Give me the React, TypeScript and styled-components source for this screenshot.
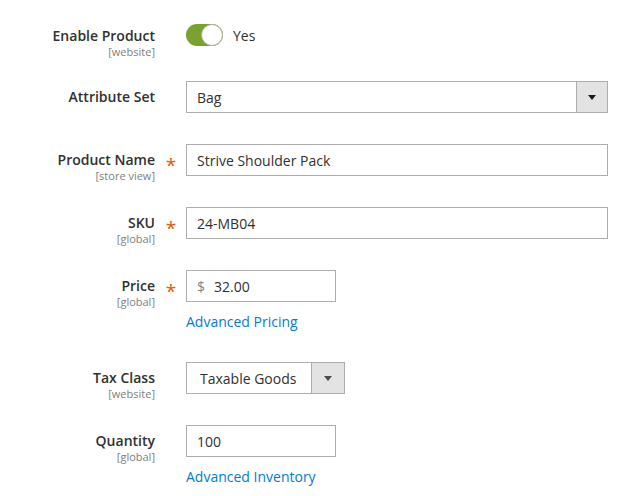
import React from "react";
import styled, { createGlobalStyle } from "styled-components";

const Global = createGlobalStyle`
  html, body { margin: 0; padding: 0; background: #fff; }
  body { font-family: "Open Sans", "Liberation Sans", sans-serif; color: #303030; }
  * { box-sizing: border-box; }
`;

const Form = styled.div`
  display: flex;
  flex-direction: column;
  gap: 31px;
  padding: 20px 22px 0 0;
  width: 630px;
`;

const Row = styled.div`
  display: grid;
  grid-template-columns: 155px 31px 1fr;
  align-items: start;
`;

const LabelBox = styled.div`
  text-align: right;
  height: 30px;
  padding-top: 6px;
`;

const LabelText = styled.div`
  font-size: 14px;
  font-weight: 600;
  line-height: 19px;
  color: #303030;
`;

const Scope = styled.div`
  font-size: 11px;
  line-height: 13px;
  color: #808080;
`;

const Req = styled.div`
  color: #eb5202;
  font-size: 19px;
  line-height: 19px;
  text-align: center;
  padding-top: 12px;
  padding-left: 1px;
  height: 30px;
`;

const Control = styled.div`
  display: flex;
  flex-direction: column;
  align-items: flex-start;
`;

const ToggleWrap = styled.div`
  display: flex;
  align-items: center;
  gap: 10px;
  height: 30px;
`;

const Track = styled.div`
  width: 37px;
  height: 22px;
  border-radius: 11px;
  background: #79a22e;
  position: relative;
`;

const Knob = styled.div`
  position: absolute;
  right: 0;
  top: 0;
  width: 22px;
  height: 22px;
  border-radius: 50%;
  background: #fff;
  border: 1px solid #adadad;
`;

const ToggleText = styled.span`
  font-size: 14px;
  color: #303030;
`;

const Input = styled.div<{ $w?: number }>`
  width: ${(p) => (p.$w ? `${p.$w}px` : "100%")};
  height: 32px;
  border: 1px solid #adadad;
  background: #fff;
  display: flex;
  align-items: center;
  padding: 0 10px;
  font-size: 14px;
  color: #303030;
`;

const Addon = styled.span`
  color: #858585;
  margin-right: 9px;
`;

const Select = styled.div<{ $w?: number }>`
  width: ${(p) => (p.$w ? `${p.$w}px` : "100%")};
  height: 32px;
  border: 1px solid #adadad;
  background: #fff;
  display: flex;
  align-items: stretch;
  font-size: 14px;
  color: #303030;
`;

const SelectValue = styled.div<{ $pad?: number }>`
  flex: 1;
  display: flex;
  align-items: center;
  padding-left: ${(p) => p.$pad ?? 10}px;
`;

const SelectBtn = styled.div<{ $w?: number; $c?: string }>`
  width: ${(p) => p.$w ?? 31}px;
  border-left: 1px solid #adadad;
  background: #e3e3e3;
  display: flex;
  align-items: center;
  justify-content: center;
  &::after {
    content: "";
    display: block;
    border-left: 4px solid transparent;
    border-right: 4px solid transparent;
    border-top: 5px solid ${(p) => p.$c ?? "#1a1a1a"};
    margin-top: 1px;
  }
`;

const Link = styled.a`
  margin-top: 10px;
  font-size: 14px;
  line-height: 19px;
  color: #007bdb;
  text-decoration: none;
`;

type FieldProps = {
  label: string;
  scope?: string;
  required?: boolean;
  children: React.ReactNode;
};

const Field = ({ label, scope, required, children }: FieldProps) => (
  <Row>
    <LabelBox>
      <LabelText>{label}</LabelText>
      {scope && <Scope>{scope}</Scope>}
    </LabelBox>
    <Req>{required ? "*" : ""}</Req>
    <Control>{children}</Control>
  </Row>
);

export default function App() {
  return (
    <>
      <Global />
      <Form>
        <Field label="Enable Product" scope="[website]">
          <ToggleWrap>
            <Track>
              <Knob />
            </Track>
            <ToggleText>Yes</ToggleText>
          </ToggleWrap>
        </Field>
        <Field label="Attribute Set">
          <Select>
            <SelectValue>Bag</SelectValue>
            <SelectBtn />
          </Select>
        </Field>
        <Field label="Product Name" scope="[store view]" required>
          <Input>Strive Shoulder Pack</Input>
        </Field>
        <Field label="SKU" scope="[global]" required>
          <Input>24-MB04</Input>
        </Field>
        <Field label="Price" scope="[global]" required>
          <Input $w={150}>
            <Addon>$</Addon>32.00
          </Input>
          <Link href="#">Advanced Pricing</Link>
        </Field>
        <Field label="Tax Class" scope="[website]">
          <Select $w={159}>
            <SelectValue $pad={13}>Taxable Goods</SelectValue>
            <SelectBtn $w={33} $c="#514943" />
          </Select>
        </Field>
        <Field label="Quantity" scope="[global]">
          <Input $w={150}>100</Input>
          <Link href="#">Advanced Inventory</Link>
        </Field>
      </Form>
    </>
  );
}
